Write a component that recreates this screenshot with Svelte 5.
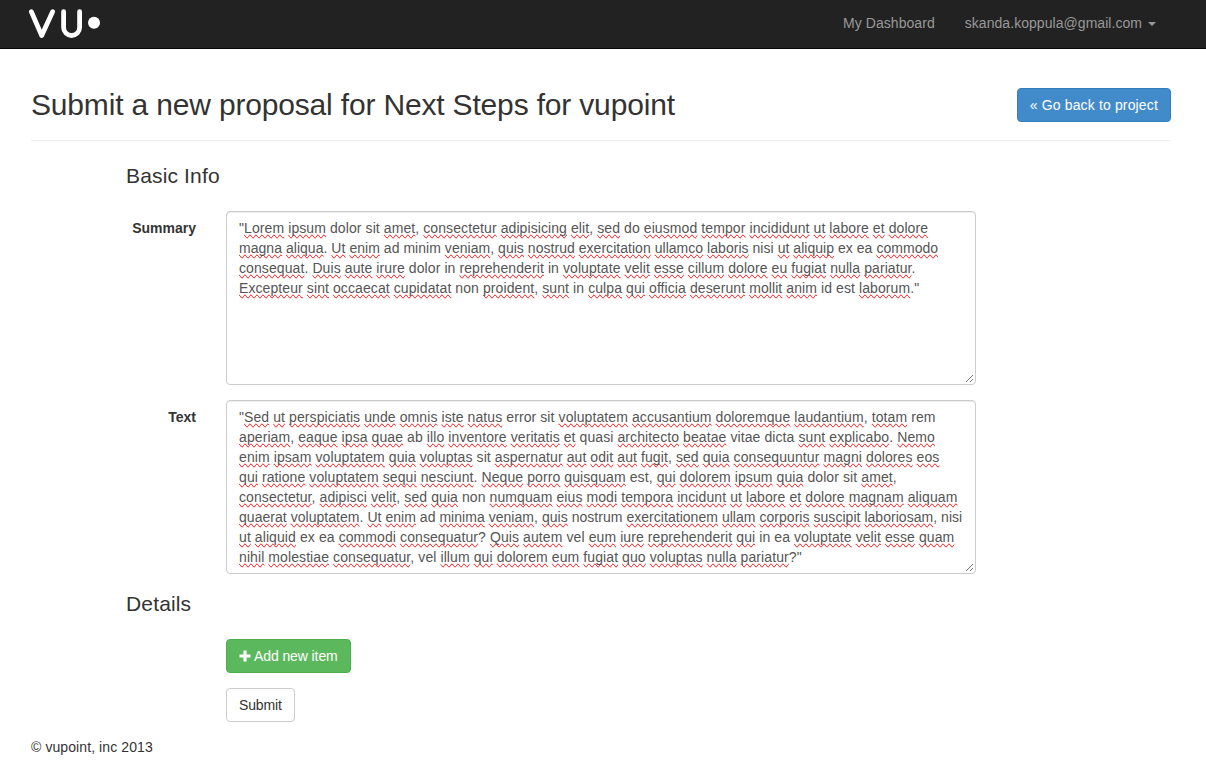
<script>
    // words the browser's spell checker left alone in the screenshot
    const known = new Set(["do", "dolor", "sit", "ad", "minim", "in", "ex", "ea", "non", "id", "est", "nisi", "error", "ab", "vitae", "dicta", "rem", "quasi", "vel", "nostrum"]);

    const summary = [
        '"Lorem ipsum dolor sit amet, consectetur adipisicing elit, sed do eiusmod tempor incididunt ut labore et dolore',
        "magna aliqua. Ut enim ad minim veniam, quis nostrud exercitation ullamco laboris nisi ut aliquip ex ea commodo",
        "consequat. Duis aute irure dolor in reprehenderit in voluptate velit esse cillum dolore eu fugiat nulla pariatur.",
        'Excepteur sint occaecat cupidatat non proident, sunt in culpa qui officia deserunt mollit anim id est laborum."',
    ];
    const text = [
        '"Sed ut perspiciatis unde omnis iste natus error sit voluptatem accusantium doloremque laudantium, totam rem',
        "aperiam, eaque ipsa quae ab illo inventore veritatis et quasi architecto beatae vitae dicta sunt explicabo. Nemo",
        "enim ipsam voluptatem quia voluptas sit aspernatur aut odit aut fugit, sed quia consequuntur magni dolores eos",
        "qui ratione voluptatem sequi nesciunt. Neque porro quisquam est, qui dolorem ipsum quia dolor sit amet,",
        "consectetur, adipisci velit, sed quia non numquam eius modi tempora incidunt ut labore et dolore magnam aliquam",
        "quaerat voluptatem. Ut enim ad minima veniam, quis nostrum exercitationem ullam corporis suscipit laboriosam, nisi",
        "ut aliquid ex ea commodi consequatur? Quis autem vel eum iure reprehenderit qui in ea voluptate velit esse quam",
        'nihil molestiae consequatur, vel illum qui dolorem eum fugiat quo voluptas nulla pariatur?"',
    ];

    // split a line into words and the bits between them
    const tokens = (line) =>
        line.split(/([A-Za-z]+)/).filter(Boolean).map((t) => ({
            t,
            bad: /^[A-Za-z]/.test(t) && !known.has(t.toLowerCase()),
        }));

    // these two run a little narrower in the screenshot
    const tight = (line) => line.endsWith("commodo") || line.endsWith("nisi");

    const fields = [
        { label: "Summary", lines: summary },
        { label: "Text", lines: text },
    ];
</script>

<nav class="navbar">
    <a class="brand" href="#home" aria-label="vupoint">
        <svg width="76" height="30" viewBox="0 0 76 30">
            <path d="M5.4 2.7 L15.7 26.6 L26.6 2.7 M37.6 2.7 V18.5 A8 8 0 0 0 53.6 18.5 V2.7" fill="none" stroke="#fff" stroke-width="4.8" stroke-linecap="round" stroke-linejoin="round" />
            <circle cx="68" cy="13.7" r="6" fill="#fff" />
        </svg>
    </a>
    <ul class="links">
        <li>My Dashboard</li>
        <li>skanda.koppula@gmail.com <span class="caret"></span></li>
    </ul>
</nav>

<main>
    <header class="head">
        <h1>Submit a new proposal for Next Steps for vupoint</h1>
        <button class="btn primary">« Go back to project</button>
    </header>

    <section class="form">
        <h2>Basic Info</h2>
        {#each fields as f}
            <div class="row">
                <div class="label">{f.label}</div>
                <div class="area">
                    {#each f.lines as line}
                        <div class="line" class:tight={tight(line)}>{#each tokens(line) as k}{#if k.bad}<span class="bad">{k.t}</span>{:else}{k.t}{/if}{/each}</div>
                    {/each}
                    <svg class="grip" width="9" height="9" viewBox="0 0 9 9">
                        <path d="M1 8 L8 1 M5 8 L8 5" stroke="#777" stroke-width="1" fill="none" />
                    </svg>
                </div>
            </div>
        {/each}
        <h2 class="details">Details</h2>
        <div class="actions">
            <button class="btn success">
                <svg width="12" height="12" viewBox="0 0 12 12"><path d="M4.4 .5 H7.6 V4.4 H11.5 V7.6 H7.6 V11.5 H4.4 V7.6 H.5 V4.4 H4.4 Z" fill="#fff" /></svg>
                Add new item
            </button>
            <button class="btn plain">Submit</button>
        </div>
    </section>
</main>

<footer>© vupoint, inc 2013</footer>

<style>
    :global(body) {
        font-family: "Liberation Sans", Arial, sans-serif;
        font-size: 14px;
        line-height: 20px;
        letter-spacing: 0.09px;
        color: #333;
        background: #fff;
    }
    .navbar {
        height: 48px;
        background: #222;
        border-bottom: 1px solid #080808;
        display: flex;
        align-items: center;
        justify-content: space-between;
        padding: 0 50px 0 26px;
    }
    .brand {
        display: block;
        height: 30px;
    }
    .links {
        display: flex;
        gap: 30px;
        list-style: none;
        margin: 0 0 2px;
        padding: 0;
        color: #999;
        letter-spacing: 0.05px;
    }
    .caret {
        display: inline-block;
        width: 0;
        height: 0;
        margin-left: 2px;
        vertical-align: middle;
        border-top: 4px solid #999;
        border-left: 4px solid transparent;
        border-right: 4px solid transparent;
    }
    main {
        padding: 0 35px 0 31px;
    }
    .head {
        display: flex;
        align-items: center;
        justify-content: space-between;
        height: 92px;
        padding-top: 21px;
        box-sizing: border-box;
        border-bottom: 1px solid #eee;
    }
    h1 {
        margin: 0 0 2px;
        font-size: 30px;
        line-height: 33px;
        font-weight: 500;
        letter-spacing: -0.17px;
    }
    h2 {
        margin: 0;
        font-size: 21px;
        line-height: 20px;
        font-weight: 500;
        letter-spacing: 0.15px;
    }
    .form {
        padding: 25px 0 0 95px;
    }
    .row {
        display: grid;
        grid-template-columns: 70px 750px;
        column-gap: 30px;
        margin-bottom: 15px;
    }
    .form > h2 + .row {
        margin-top: 25px;
    }
    .label {
        padding-top: 7px;
        text-align: right;
        font-weight: 700;
        letter-spacing: 0;
    }
    .area {
        position: relative;
        box-sizing: border-box;
        height: 174px;
        padding: 6px 12px;
        color: #555;
        background: #fff;
        border: 1px solid #ccc;
        border-radius: 4px;
        box-shadow: inset 0 1px 1px rgba(0, 0, 0, 0.075);
    }
    .line {
        white-space: nowrap;
    }
    .tight {
        letter-spacing: 0.035px;
    }
    .bad {
        text-decoration: spelling-error;
    }
    .grip {
        position: absolute;
        right: 1px;
        bottom: 1px;
    }
    .details {
        margin-top: 20px;
    }
    .actions {
        display: flex;
        flex-direction: column;
        align-items: flex-start;
        gap: 15px;
        margin: 25px 0 0 100px;
    }
    .btn {
        box-sizing: border-box;
        height: 34px;
        padding: 6px 12px;
        font: inherit;
        border: 1px solid transparent;
        border-radius: 4px;
        cursor: pointer;
        white-space: nowrap;
    }
    .primary {
        color: #fff;
        background: #428bca;
        border-color: #357ebd;
        letter-spacing: 0.15px;
    }
    .success {
        color: #fff;
        background: #5cb85c;
        border-color: #4cae4c;
        letter-spacing: -0.1px;
    }
    .success svg {
        vertical-align: -1px;
    }
    .plain {
        color: #333;
        background: #fff;
        border-color: #ccc;
        letter-spacing: -0.15px;
    }
    footer {
        padding: 15px 31px 0;
    }
</style>
